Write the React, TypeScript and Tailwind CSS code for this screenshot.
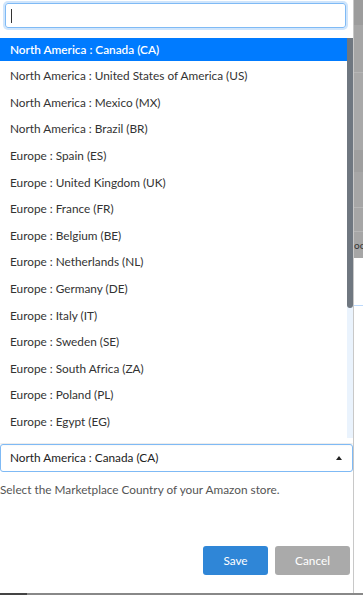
import React from 'react';

const countries = [
  'North America : Canada (CA)',
  'North America : United States of America (US)',
  'North America : Mexico (MX)',
  'North America : Brazil (BR)',
  'Europe : Spain (ES)',
  'Europe : United Kingdom (UK)',
  'Europe : France (FR)',
  'Europe : Belgium (BE)',
  'Europe : Netherlands (NL)',
  'Europe : Germany (DE)',
  'Europe : Italy (IT)',
  'Europe : Sweden (SE)',
  'Europe : South Africa (ZA)',
  'Europe : Poland (PL)',
  'Europe : Egypt (EG)',
];

const App: React.FC = () => {
  return (
    <div className="flex h-[595px] w-[363px] flex-col overflow-hidden bg-white font-['Lato','Open_Sans',sans-serif] text-[11.8px] text-[#333]">
      <div className="flex flex-1">
        {/* modal content */}
        <div className="flex w-[353px] flex-col">
          {/* open dropdown */}
          <div className="flex h-[443px] flex-col bg-white shadow-[0_1px_3px_rgba(0,0,0,0.12)]">
            <div className="pl-[5px] pr-[7px] pt-[3px]">
              <div className="flex h-[25px] items-center rounded-[3px] border border-[#7fbaf5] px-[5px] shadow-[0_0_0_2px_#cfe5fc]">
                <span className="h-[14px] w-px bg-[#333]" />
              </div>
            </div>
            <div className="mt-[10px] flex h-[400px]">
              <ul className="flex-1">
                {countries.map((c, i) => (
                  <li
                    key={c}
                    className={`mb-[3.6px] flex h-[23px] items-center pl-[10px] ${
                      i === 0 ? 'bg-[#007bff] font-semibold text-white' : 'text-[#333]'
                    }`}
                  >
                    {c}
                  </li>
                ))}
              </ul>
              <div className="flex w-[6px] flex-col bg-[#eaf3fd]">
                <div className="h-[270px] rounded-b-[3px] bg-[#6f7780]" />
              </div>
            </div>
          </div>

          {/* selected value */}
          <div className="mt-[1px] flex h-[28px] items-center justify-between rounded-[3px] border border-[#7fbaf5] pl-[9px] pr-[10px] text-[#222]">
            <span>North America : Canada (CA)</span>
            <svg width="6" height="4" viewBox="0 0 6 4">
              <path d="M0 4 L3 0 L6 4 Z" fill="#222" />
            </svg>
          </div>
          <p className="mt-[9px] text-[#555]">Select the Marketplace Country of your Amazon store.</p>

          <div className="mt-auto mb-[18px] flex justify-end gap-[7px] pr-[3px]">
            <button className="h-[29px] w-[65px] rounded-[3px] bg-[#2f86d7] text-white">Save</button>
            <button className="h-[29px] w-[75px] rounded-[3px] bg-[#aaaaaa] text-white">Cancel</button>
          </div>
        </div>

        {/* page behind the overlay */}
        <div className="flex w-[10px] flex-col border-l border-[#c8c8c8]">
          <div className="h-[25px] bg-[#9c9c9c]" />
          <div className="h-[48px] border-b border-[#b5b5b5] bg-[#a6a6a6]" />
          <div className="h-[77px] bg-[#a9a9a9]" />
          <div className="h-[22px] bg-[#9f9f9f]" />
          <div className="h-[36px] border-b border-[#b5b5b5] bg-[#a6a6a6]" />
          <div className="h-[24px] border-b border-[#b5b5b5] bg-[#a6a6a6]" />
          <div className="flex h-[26px] items-center overflow-hidden bg-[#a6a6a6] text-[10px] text-[#333]">oc</div>
          <div className="h-[48px] border-b border-[#bcd9fb] bg-white" />
          <div className="flex-1 bg-white" />
        </div>
      </div>
      <div className="flex h-[2px]">
        <div className="w-[27px] bg-[#444]" />
        <div className="flex-1 bg-[#888]" />
      </div>
    </div>
  );
};

export default App;
